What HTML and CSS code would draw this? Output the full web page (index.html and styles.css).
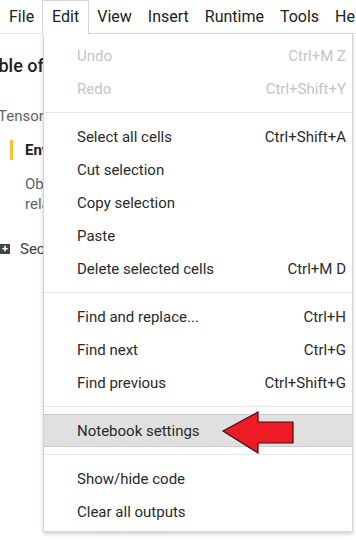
FILE: index.html
```html
<!DOCTYPE html>
<html lang="en">
<head>
  <meta charset="UTF-8" />
  <title>Notebook - Edit menu</title>
  <meta name="viewport" content="width=device-width, initial-scale=1.0" />
  <link rel="stylesheet" href="styles.css">
</head>
<body>
  <nav class="menubar">
    <div class="menubar-item">File</div>
    <div class="menubar-item active">Edit</div>
    <div class="menubar-item">View</div>
    <div class="menubar-item">Insert</div>
    <div class="menubar-item">Runtime</div>
    <div class="menubar-item">Tools</div>
    <div class="menubar-item">Help</div>
  </nav>

  <aside class="toc">
    <div class="toc-title">Table of contents</div>
    <div class="toc-text">TensorFlow Hub</div>
    <div class="toc-entry">
      <span class="toc-bar"></span>
      <span class="toc-heading">Environment</span>
    </div>
    <div class="toc-desc">Obtain the notebook and set up<br>related dependencies</div>
    <div class="toc-section">
      <span class="plus-box">+</span>
      <span>Section</span>
    </div>
  </aside>

  <div class="menu" id="editMenu">
    <div class="menu-item disabled"><span>Undo</span><span class="shortcut">Ctrl+M Z</span></div>
    <div class="menu-item disabled"><span>Redo</span><span class="shortcut">Ctrl+Shift+Y</span></div>
    <div class="separator"></div>
    <div class="menu-item"><span>Select all cells</span><span class="shortcut">Ctrl+Shift+A</span></div>
    <div class="menu-item"><span>Cut selection</span></div>
    <div class="menu-item"><span>Copy selection</span></div>
    <div class="menu-item"><span>Paste</span></div>
    <div class="menu-item"><span>Delete selected cells</span><span class="shortcut">Ctrl+M D</span></div>
    <div class="separator"></div>
    <div class="menu-item"><span>Find and replace...</span><span class="shortcut">Ctrl+H</span></div>
    <div class="menu-item"><span>Find next</span><span class="shortcut">Ctrl+G</span></div>
    <div class="menu-item"><span>Find previous</span><span class="shortcut">Ctrl+Shift+G</span></div>
    <div class="separator"></div>
    <div class="menu-item hover"><span>Notebook settings</span></div>
    <div class="separator"></div>
    <div class="menu-item"><span>Show/hide code</span></div>
    <div class="menu-item"><span>Clear all outputs</span></div>

    <!-- callout arrow pointing at the hovered item -->
    <svg class="callout" width="76" height="46" viewBox="0 0 76 46">
      <polygon points="2,20 37,1 37,11 72,11 72,32 37,32 37,42" fill="#ed1c24" stroke="#3a1010" stroke-width="1.2" stroke-linejoin="miter" />
    </svg>
  </div>
</body>
</html>
```

FILE: styles.css
```css
* { box-sizing: border-box; }
body {
  margin: 0;
  background-color: #fff;
  font-family: Roboto, 'Liberation Sans', sans-serif;
  color: #212121;
  width: 356px;
  height: 540px;
  overflow: hidden;
  position: relative;
}
.menubar {
  display: flex;
  height: 34px;
  border-bottom: 1px solid #e3e3e3;
  white-space: nowrap;
}
.menubar-item {
  font-size: 16px;
  padding: 6px 7px 0 7px;
  border: 1px solid transparent;
  border-bottom: none;
  color: #212121;
}
.menubar-item:first-child { padding-left: 8px; }
.menubar-item.active {
  border-color: #d6d6d6;
  background: #fff;
  position: relative;
  z-index: 3;
  height: 34px;
  padding-left: 9px;
  padding-right: 9px;
}

/* notebook sidebar, mostly hidden under the menu */
.toc { padding-top: 21px; white-space: nowrap; overflow: hidden; }
.toc-title {
  font-size: 18px; font-weight: 500; color: #202124;
  margin-left: -21px; height: 24px;
}
.toc-text {
  font-size: 15px; color: #5f6368;
  margin-top: 28px; margin-left: -2px;
}
.toc-entry {
  display: flex; align-items: center; gap: 12px;
  margin-top: 15px; padding-left: 10px; height: 20px;
}
.toc-bar { width: 3px; height: 20px; background: #fbc02d; }
.toc-heading { font-size: 15px; font-weight: 700; color: #202124; }
.toc-desc {
  font-size: 15px; color: #5f6368; line-height: 20px;
  margin-top: 14px; padding-left: 25px;
}
.toc-section {
  display: flex; align-items: center; gap: 10px;
  margin-top: 26px; font-size: 15px; color: #3c4043;
}
.plus-box {
  width: 10px; height: 10px; background: #444; color: #fff;
  font-size: 11px; line-height: 10px; text-align: center; font-weight: 700;
}

/* dropdown */
.menu {
  position: absolute;
  top: 33px; left: 43px;
  width: 310px;
  background: #fff;
  border: 1px solid #d6d6d6;
  box-shadow: 0 2px 4px rgba(0, 0, 0, 0.2);
  padding: 5px 0 3px 0;
  z-index: 2;
}
.menu-item {
  display: flex; justify-content: space-between; align-items: center;
  height: 33px;
  padding: 0 6px 0 33px;
  font-size: 15px; color: #2a2a2a;
  white-space: nowrap;
}
.menu-item.disabled { color: #c4c4c4; }
.menu-item.hover {
  background: #e0e0e0;
  border-top: 1px dotted #bdbdbd;
  border-bottom: 1px dotted #bdbdbd;
}
.shortcut { color: inherit; }
.separator { height: 1px; background: #e6e6e6; margin: 7px 0; }
.callout { position: absolute; left: 177px; top: 377px; }
```
